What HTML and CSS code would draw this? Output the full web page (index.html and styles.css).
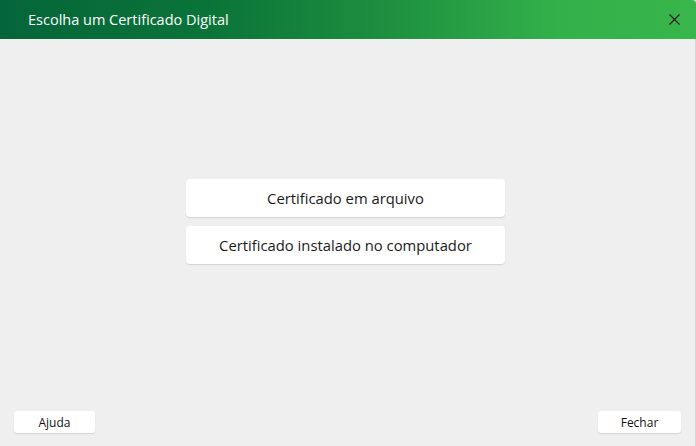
FILE: index.html
```html
<!DOCTYPE html>
<html lang="pt">
<head>
<meta charset="utf-8">
<link rel="stylesheet" href="styles.css">
</head>
<body>
<div class="window">
  <header class="titlebar">
    <span class="title">Escolha um Certificado Digital</span>
    <button class="close" aria-label="Fechar">
      <svg width="11" height="11" viewBox="0 0 11 11"><path d="M0.5 0.5L10.5 10.5M10.5 0.5L0.5 10.5" stroke="#1b1b1b" stroke-width="1.2" fill="none"/></svg>
    </button>
  </header>
  <main class="content">
    <div class="choices">
      <button class="choice">Certificado em arquivo</button>
      <button class="choice">Certificado instalado no computador</button>
    </div>
  </main>
  <footer class="footer">
    <button class="small">Ajuda</button>
    <button class="small fechar">Fechar</button>
  </footer>
</div>
</body>
</html>
```
FILE: styles.css
```css
html, body {
  margin: 0;
  padding: 0;
  width: 696px;
  height: 446px;
  overflow: hidden;
  background: #efefef;
}
.window {
  width: 696px;
  height: 446px;
  display: flex;
  flex-direction: column;
  font-family: "Open Sans", "Noto Sans", sans-serif;
  background: #efefef;
  border-right: 1px solid #d6d6d6;
  box-sizing: border-box;
}
.titlebar {
  height: 39px;
  flex: none;
  display: flex;
  align-items: center;
  justify-content: space-between;
  padding: 0 16px 0 28px;
  background: linear-gradient(90deg, #04653a 0%, #0a7438 30%, #1d8f3f 55%, #33b04a 80%, #38b64b 100%);
  border-top-right-radius: 4px;
  margin-right: -1px;
}
.title {
  color: #ffffff;
  font-size: 14.5px;
}
.close {
  background: none;
  border: 0;
  padding: 0;
  width: 11px;
  height: 11px;
  display: flex;
}
.content {
  flex: 1;
  display: flex;
  align-items: center;
  justify-content: center;
  padding-right: 4px;
}
.choices {
  display: flex;
  flex-direction: column;
  gap: 9px;
  margin-top: -8px;
}
.choice {
  width: 319px;
  height: 38px;
  background: #ffffff;
  border: 0;
  border-radius: 4px;
  box-shadow: 0 1px 1px rgba(0,0,0,0.12);
  font-family: inherit;
  font-size: 14.8px;
  color: #1a1a1a;
}
.footer {
  display: flex;
  justify-content: space-between;
  padding: 0 14px 13px 14px;
}
.small {
  width: 81px;
  height: 22px;
  background: #ffffff;
  border: 0;
  border-radius: 3px;
  box-shadow: 0 1px 1px rgba(0,0,0,0.12);
  font-family: inherit;
  font-size: 12px;
  color: #111;
}
.fechar {
  width: 83px;
}
```
